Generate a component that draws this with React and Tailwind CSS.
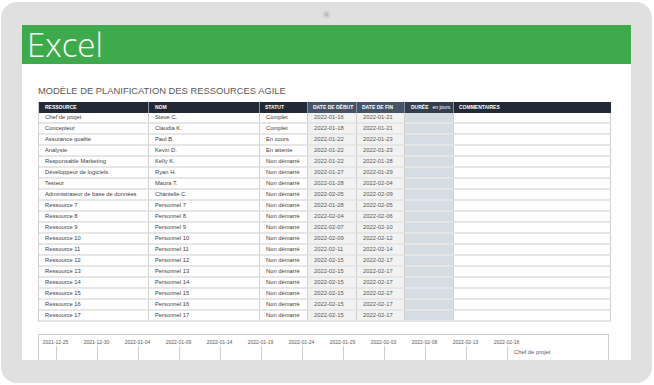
const rows = [
  ["Chef de projet", "Steve C.", "Complet", "2022-01-16", "2022-01-21"],
  ["Concepteur", "Claudia K.", "Complet", "2022-01-18", "2022-01-21"],
  ["Assurance qualité", "Paul B.", "En cours", "2022-01-22", "2022-01-23"],
  ["Analyste", "Kevin D.", "En attente", "2022-01-22", "2022-01-23"],
  ["Responsable Marketing", "Kelly K.", "Non démarré", "2022-01-22", "2022-01-28"],
  ["Développeur de logiciels", "Ryan H.", "Non démarré", "2022-01-27", "2022-01-29"],
  ["Testeur", "Maura T.", "Non démarré", "2022-01-28", "2022-02-04"],
  ["Administrateur de base de données", "Chantelle C.", "Non démarré", "2022-02-05", "2022-02-09"],
  ["Ressource 7", "Personnel 7", "Non démarré", "2022-01-28", "2022-02-05"],
  ["Ressource 8", "Personnel 8", "Non démarré", "2022-02-04", "2022-02-06"],
  ["Ressource 9", "Personnel 9", "Non démarré", "2022-02-07", "2022-02-10"],
  ["Ressource 10", "Personnel 10", "Non démarré", "2022-02-09", "2022-02-12"],
  ["Ressource 11", "Personnel 11", "Non démarré", "2022-02-11", "2022-02-14"],
  ["Ressource 12", "Personnel 12", "Non démarré", "2022-02-15", "2022-02-17"],
  ["Ressource 13", "Personnel 13", "Non démarré", "2022-02-15", "2022-02-17"],
  ["Ressource 14", "Personnel 14", "Non démarré", "2022-02-15", "2022-02-17"],
  ["Ressource 15", "Personnel 15", "Non démarré", "2022-02-15", "2022-02-17"],
  ["Ressource 16", "Personnel 16", "Non démarré", "2022-02-15", "2022-02-17"],
  ["Ressource 17", "Personnel 17", "Non démarré", "2022-02-15", "2022-02-17"],
];

const ticks = [
  "2021-12-25", "2021-12-30", "2022-01-04", "2022-01-09", "2022-01-14", "2022-01-19",
  "2022-01-24", "2022-01-29", "2022-02-03", "2022-02-08", "2022-02-13", "2022-02-18",
];

const cols = "grid grid-cols-[110px_111px_48px_49px_48px_49px_157px]";

function Cell({ children, className = "" }) {
  return (
    <div
      className={`h-[11px] flex items-center pl-[6px] border-r border-r-[#d0d0d0] border-b-2 border-b-[#e6e6e6] whitespace-nowrap overflow-hidden ${className}`}
    >
      {children}
    </div>
  );
}

export default function App() {
  return (
    <div
      className="w-[654px] h-[385px] bg-white pt-[2px] pl-[1px] pr-[2px] pb-[2px]"
      style={{ fontFamily: '"Liberation Sans", Arial, sans-serif' }}
    >
      <div className="relative h-full rounded-[16px] bg-[#e0e0e0] flex flex-col pt-[23px] px-[21px] pb-[23px]">
        <div className="absolute left-[322px] top-[9px] w-[7px] h-[7px] rounded-full bg-[#d4d4d4] border border-[#c4c4c4] flex items-center justify-center">
          <div className="w-[3px] h-[3px] rounded-full bg-[#b8b8b8]" />
        </div>

        <div className="flex-1 bg-white flex flex-col min-h-0">
          <div className="h-[39px] shrink-0 bg-[#3dab4b] flex items-center pl-[5px]">
            <span
              className="text-white text-[33px] leading-[39px] font-light pr-[2px]"
              style={{ fontFamily: '"Open Sans", sans-serif' }}
            >
              Excel
            </span>
          </div>

          <div className="flex-1 min-h-0 overflow-hidden pl-[16px] pt-[21px]">
            <div className="text-[9.4px] leading-[12px] text-[#595959] whitespace-nowrap">
              MODÈLE DE PLANIFICATION DES RESSOURCES AGILE
            </div>

            <div className="mt-[5px] w-[572px] border-l border-[#d0d0d0] text-[5.8px] text-[#404040]">
              <div className={`${cols} h-[11px] text-white font-bold text-[5px]`}>
                <div className="bg-[#222b35] flex items-center pl-[6px] border-r border-[#8a8f96]">RESSOURCE</div>
                <div className="bg-[#222b35] flex items-center pl-[6px] border-r border-[#8a8f96]">NOM</div>
                <div className="bg-[#222b35] flex items-center pl-[5px] border-r border-[#8a8f96]">STATUT</div>
                <div className="bg-[#44546a] flex items-center pl-[5px] border-r border-[#8a8f96]">DATE DE DÉBUT</div>
                <div className="bg-[#44546a] flex items-center pl-[5px] border-r border-[#8a8f96]">DATE DE FIN</div>
                <div className="bg-[#333f4f] flex items-center pl-[6px] border-r border-[#8a8f96] whitespace-nowrap">
                  DURÉE<span className="font-normal ml-[4px]">en jours</span>
                </div>
                <div className="bg-[#222b35] flex items-center pl-[5px]">COMMENTAIRES</div>
              </div>
              {rows.map((r) => (
                <div key={r[0]} className={cols}>
                  <Cell>{r[0]}</Cell>
                  <Cell>{r[1]}</Cell>
                  <Cell className="pl-[5px]">{r[2]}</Cell>
                  <Cell className="bg-[#f2f2f2] pl-[5px] text-[#595959]">{r[3]}</Cell>
                  <Cell className="bg-[#f2f2f2] pl-[5px] text-[#595959]">{r[4]}</Cell>
                  <Cell className="bg-[#d6dce4] border-b-[#c9d0da]"></Cell>
                  <Cell></Cell>
                </div>
              ))}
            </div>

            <div className="mt-[12px] w-[571px] h-[40px] border border-[#cfcfcf] text-[5px] text-[#595959]">
              <div className="flex ml-[-4px] h-[11px] items-end">
                {ticks.map((t) => (
                  <div key={t} className="w-[41px] shrink-0 text-center whitespace-nowrap">
                    {t}
                  </div>
                ))}
              </div>
              <div className="flex pl-[17px] h-[30px]">
                {ticks.map((t, i) => (
                  <div
                    key={t}
                    className={`shrink-0 border-l border-[#cfcfcf] ${i === ticks.length - 1 ? "pl-[6px] pt-[2px] text-[5.8px] whitespace-nowrap" : "w-[41px]"}`}
                  >
                    {i === ticks.length - 1 ? "Chef de projet" : null}
                  </div>
                ))}
              </div>
            </div>
          </div>
        </div>
      </div>
    </div>
  );
}
